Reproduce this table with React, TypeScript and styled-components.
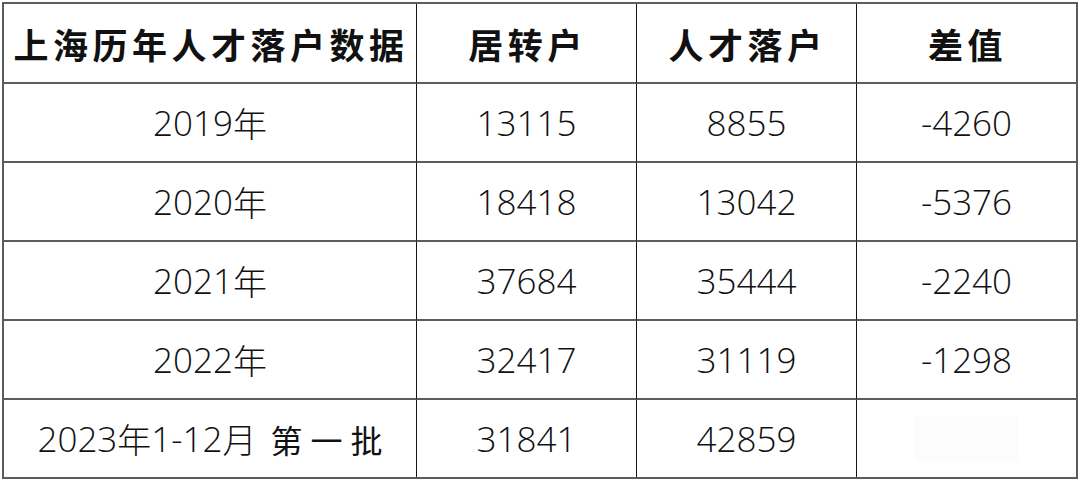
import React from "react";
import styled, { createGlobalStyle } from "styled-components";

const Global = createGlobalStyle`
  html, body { margin: 0; padding: 0; background: #ffffff; }
  body { width: 1080px; height: 480px; overflow: hidden; }
`;

const Page = styled.div`
  padding: 2px 0 0 2px;
  width: 1080px;
  height: 480px;
  box-sizing: border-box;
  background: #fff;
`;

const Grid = styled.div`
  display: grid;
  grid-template-columns: 413px 220px 220px 219px;
  grid-template-rows: 80px repeat(4, 79px) 77px;
  width: fit-content;
  border: 2px solid #5c5c5c;
`;

const Cell = styled.div<{ $lastCol?: boolean; $lastRow?: boolean; $head?: boolean }>`
  display: flex;
  align-items: center;
  justify-content: center;
  box-sizing: border-box;
  border-right: ${(p) => (p.$lastCol ? "none" : "1px solid #141414")};
  border-bottom: ${(p) => (p.$lastRow ? "none" : "2px solid #5c5c5c")};
  color: #111;
  white-space: nowrap;
  ${(p) =>
    p.$head
      ? `
    font-family: "Noto Sans CJK SC", sans-serif;
    font-weight: 700;
    font-size: 35px;
    letter-spacing: 4.5px;
    padding-left: 2px;
  `
      : `
    font-family: "Open Sans", "Noto Sans CJK SC", sans-serif;
    font-weight: 300;
    font-size: 35px;
    padding-top: 0;
  `}
`;

const Kai = styled.span`
  font-family: "Noto Sans CJK SC", sans-serif;
  font-weight: 400;
  font-size: 32px;
  letter-spacing: 8px;
  margin-left: 14px;
  margin-right: -8px;
`;

const Han = styled.span`
  font-family: "Noto Sans CJK SC", sans-serif;
  font-weight: 300;
  font-size: 34px;
`;

const Watermark = styled.div`
  width: 104px;
  height: 44px;
  margin-left: -2px;
  background: #fcfcfd;
`;

const header = ["上海历年人才落户数据", "居转户", "人才落户", "差值"];
const rows = [
  ["2019", "13115", "8855", "-4260"],
  ["2020", "18418", "13042", "-5376"],
  ["2021", "37684", "35444", "-2240"],
  ["2022", "32417", "31119", "-1298"],
];

export default function App() {
  return (
    <Page>
      <Global />
      <Grid>
        {header.map((h, i) => (
          <Cell key={h} $head $lastCol={i === 3}>
            {h}
          </Cell>
        ))}
        {rows.map((r) => (
          <React.Fragment key={r[0]}>
            <Cell>
              {r[0]}
              <Han>年</Han>
            </Cell>
            <Cell>{r[1]}</Cell>
            <Cell>{r[2]}</Cell>
            <Cell $lastCol>{r[3]}</Cell>
          </React.Fragment>
        ))}
        <Cell $lastRow>
          2023<Han>年</Han>1-12<Han>月</Han>
          <Kai>第一批</Kai>
        </Cell>
        <Cell $lastRow>31841</Cell>
        <Cell $lastRow>42859</Cell>
        <Cell $lastRow $lastCol>
          <Watermark />
        </Cell>
      </Grid>
    </Page>
  );
}
